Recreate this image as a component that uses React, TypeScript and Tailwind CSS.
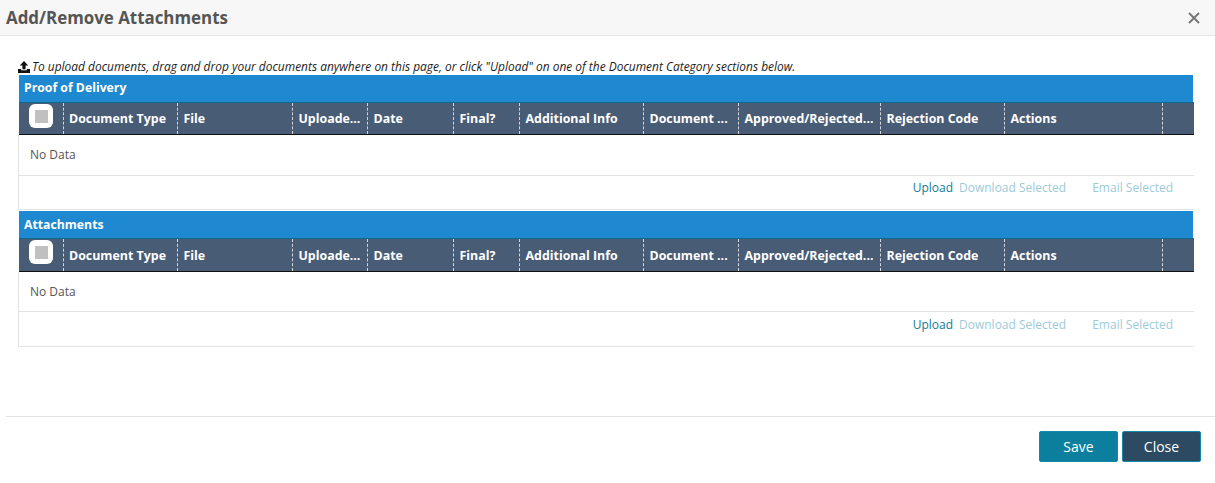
const columns = [
  { label: "Document Type", width: "w-[114px] pl-[5px]" },
  { label: "File", width: "w-[115px] pl-[5.5px]" },
  { label: "Uploade...", width: "w-[75px] pl-[5.5px]" },
  { label: "Date", width: "w-[86px] pl-[5.5px]" },
  { label: "Final?", width: "w-[66px] pl-[5.5px]" },
  { label: "Additional Info", width: "w-[124px] pl-[5.5px]" },
  { label: "Document ...", width: "w-[95px] pl-[5.5px]" },
  { label: "Approved/Rejected...", width: "w-[142px] pl-[5.5px]" },
  { label: "Rejection Code", width: "w-[124px] pl-[5.5px]" },
  { label: "Actions", width: "w-[158px] pl-[5.5px]" },
];

function UploadIcon() {
  return (
    <svg width="12" height="12" viewBox="0 0 12 12" className="shrink-0 text-[#111]" fill="currentColor">
      <path d="M6 0 L10.2 4.4 H7.6 V8.2 H4.4 V4.4 H1.8 Z" />
      <path d="M0 8 H3.2 V9.3 H8.8 V8 H12 V12 H0 Z" />
    </svg>
  );
}

interface SectionProps {
  title: string;
  titleClass: string;
  headerClass: string;
  bodyClass: string;
  rowClass: string;
}

function Section({ title, titleClass, headerClass, bodyClass, rowClass }: SectionProps) {
  return (
    <section>
      <div className={`ml-px flex h-[27px] w-[1174px] items-center bg-[#1e88d0] pl-[5px] text-[12.25px] font-bold text-white ${titleClass}`}>{title}</div>
      <div className={`ml-px flex w-[1175px] border-t border-b border-t-[#0f6a8c] border-b-[#111] bg-[#495c75] text-[12.4px] font-bold text-white ${headerClass}`}>
        <div className="w-[44px] pt-px pl-[10px]">
          <div className="flex h-6 w-6 items-center justify-center rounded-md bg-white">
            <div className="h-[13px] w-[13px] bg-[#c0c0c0]" />
          </div>
        </div>
        {columns.map((col) => (
          <div key={col.label} className={`flex ${col.width} items-center truncate border-l border-dashed border-[#d5d5d5] pt-[2px]`}>
            {col.label}
          </div>
        ))}
        <div className="flex-1 border-l border-dashed border-[#d5d5d5]" />
      </div>
      <div className="w-[1176px] border-l border-[#e3e3e3]">
        <div className={`border-b border-[#e3e3e3] pt-3 pl-[11px] text-xs text-[#555] ${bodyClass}`}>No Data</div>
        <div className={`flex justify-end border-b border-[#e3e3e3] pr-[21px] text-xs ${rowClass}`}>
          <a className="mr-1.5 text-[#137c94]">Upload</a>
          <a className="mr-[26px] text-[#9ccbd8]">Download Selected</a>
          <a className="text-[#9ccbd8]">Email Selected</a>
        </div>
      </div>
    </section>
  );
}

export default function App() {
  return (
    <div className="h-[483px] w-[1215px] overflow-hidden bg-white font-['Open_Sans',sans-serif]">
      <header className="flex h-9 items-center justify-between border-b border-[#e3e3e3] bg-[#f7f7f7] pr-[15px] pl-1.5">
        <h1 className="text-[16.9px] font-bold text-[#555]">Add/Remove Attachments</h1>
        <svg width="12" height="12" viewBox="0 0 12 12" stroke="#777" strokeWidth="2" fill="none">
          <path d="M1 1 L11 11 M11 1 L1 11" />
        </svg>
      </header>

      <div className="pt-[23px] pl-[18px]">
        <p className="flex h-4 items-center gap-[2px] text-[11.94px] text-[#222] italic">
          <UploadIcon />
          To upload documents, drag and drop your documents anywhere on this page, or click "Upload" on one of the Document Category sections below.
        </p>
        <Section title="Proof of Delivery" titleClass="pt-0" headerClass="h-[33px]" bodyClass="h-[41px]" rowClass="h-[34px] pt-1" />
        <div className="h-px" />
        <Section title="Attachments" titleClass="pt-[2px]" headerClass="h-[34px]" bodyClass="h-10" rowClass="h-[35px] pt-[5px]" />
      </div>

      <div className="mt-[69px] ml-1.5 border-t border-[#e3e3e3]" />
      <footer className="flex justify-end gap-1 pt-3.5 pr-3.5">
        <button className="h-[31px] w-[79px] rounded-[2px] border border-[#1489a8] bg-[#0d7f9e] text-sm text-white">Save</button>
        <button className="h-[31px] w-[79px] rounded-[2px] border border-[#1489a8] bg-[#2c4a62] text-sm text-white">Close</button>
      </footer>
    </div>
  );
}
